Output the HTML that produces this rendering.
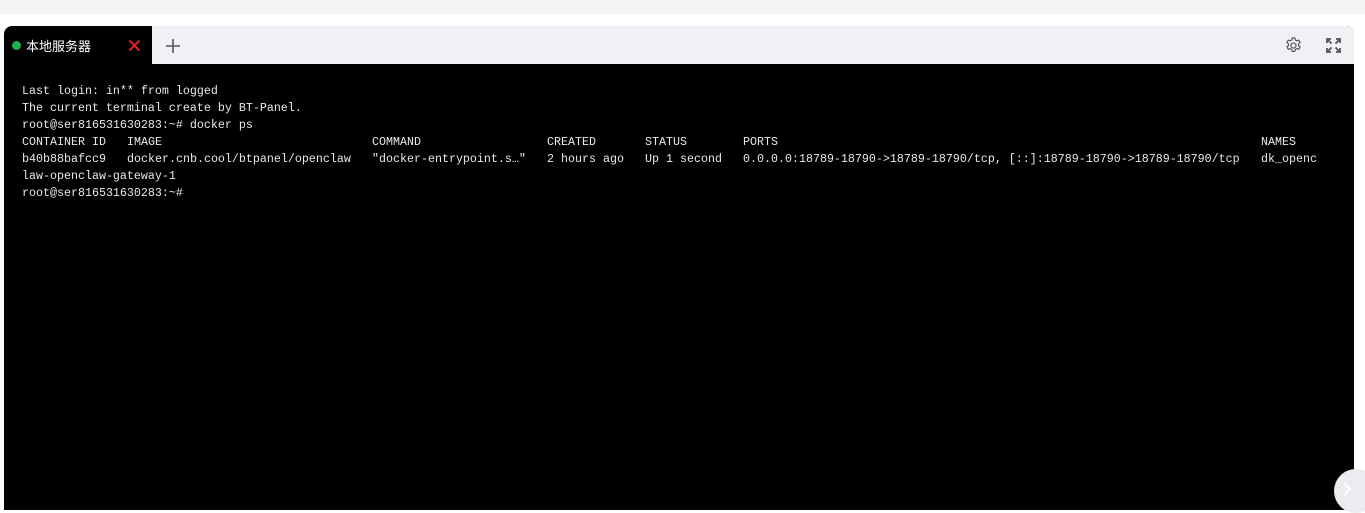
<!DOCTYPE html>
<html><head><meta charset="utf-8"><style>
html,body{margin:0;padding:0;width:1365px;height:510px;overflow:hidden;background:#fff;}
.top{position:absolute;left:0;top:0;width:1365px;height:14px;background:#f5f5f5;}
.panel{position:absolute;left:4px;top:26px;width:1350px;height:484px;background:#000;border-radius:8px 8px 0 0;overflow:hidden;}
.bar{position:absolute;left:0;top:0;width:1350px;height:38px;background:#f0f1f5;}
.tab{position:absolute;left:0;top:0;width:148px;height:38px;background:#000;border-radius:8px 0 0 0;}
.dot{position:absolute;left:8px;top:15px;width:9px;height:9px;border-radius:50%;background:#20b14a;}
.tt{position:absolute;left:22px;top:10px;color:#fff;font:13px "Liberation Sans","Noto Sans CJK SC",sans-serif;}
.term{position:absolute;left:0;top:38px;width:1350px;height:446px;background:#000;color:#e8e8e8;font:11.67px "Liberation Mono",monospace;}
.l{position:absolute;white-space:pre;line-height:17px;}
</style></head><body>
<div class="top"></div>
<div class="panel">
<div class="bar">
<div class="tab"><div class="dot"></div><div class="tt">本地服务器</div>
<svg style="position:absolute;left:124px;top:13px" width="13" height="13" viewBox="0 0 13 13"><path d="M1.5 1.5L11.5 11.5M11.5 1.5L1.5 11.5" stroke="#e52020" stroke-width="2"/></svg></div>
<svg style="position:absolute;left:161px;top:12px" width="16" height="16" viewBox="0 0 16 16"><path d="M8 1V15M1 8H15" stroke="#555" stroke-width="1.6"/></svg>
<svg style="position:absolute;left:1280px;top:10px" width="19" height="19" viewBox="0 0 24 24" fill="none" stroke="#555" stroke-width="1.5"><circle cx="12" cy="12" r="3.2"/><path d="M10.3 2.5h3.4l.6 2.6 1.8 1 2.5-.9 1.7 2.9-2 1.8v2.2l2 1.8-1.7 2.9-2.5-.9-1.8 1-.6 2.6h-3.4l-.6-2.6-1.8-1-2.5.9-1.7-2.9 2-1.8v-2.2l-2-1.8 1.7-2.9 2.5.9 1.8-1z"/></svg>
<svg style="position:absolute;left:1322px;top:12px" width="15" height="15" viewBox="0 0 15 15" fill="none" stroke="#555" stroke-width="1.8"><path d="M1 5V1H5M1 1L5.5 5.5M10 1H14V5M14 1L9.5 5.5M1 10V14H5M1 14L5.5 9.5M14 10V14H10M14 14L9.5 9.5"/></svg>
</div>
<div class="term">
<div class="l" style="left:18px;top:19px">Last login: in** from logged
The current terminal create by BT-Panel.
root@ser816531630283:~# docker ps</div>
<div class="l" style="left:18px;top:70px">CONTAINER ID</div>
<div class="l" style="left:123px;top:70px">IMAGE</div>
<div class="l" style="left:368px;top:70px">COMMAND</div>
<div class="l" style="left:543px;top:70px">CREATED</div>
<div class="l" style="left:641px;top:70px">STATUS</div>
<div class="l" style="left:739px;top:70px">PORTS</div>
<div class="l" style="left:1257px;top:70px">NAMES</div>
<div class="l" style="left:18px;top:87px">b40b88bafcc9</div>
<div class="l" style="left:123px;top:87px">docker.cnb.cool/btpanel/openclaw</div>
<div class="l" style="left:368px;top:87px">"docker-entrypoint.s…"</div>
<div class="l" style="left:543px;top:87px">2 hours ago</div>
<div class="l" style="left:641px;top:87px">Up 1 second</div>
<div class="l" style="left:739px;top:87px">0.0.0.0:18789-18790-&gt;18789-18790/tcp, [::]:18789-18790-&gt;18789-18790/tcp</div>
<div class="l" style="left:1257px;top:87px">dk_openc</div>
<div class="l" style="left:18px;top:104px">law-openclaw-gateway-1
root@ser816531630283:~#</div>
</div>
</div>
<div style="position:absolute;left:1334px;top:469px;width:44px;height:44px;border-radius:50%;background:#ebecf0;"></div>
<svg style="position:absolute;left:1342px;top:482px" width="10" height="14" viewBox="0 0 10 14"><path d="M2 1L8 7L2 13" stroke="#fff" stroke-width="2" fill="none"/></svg>
</body></html>
